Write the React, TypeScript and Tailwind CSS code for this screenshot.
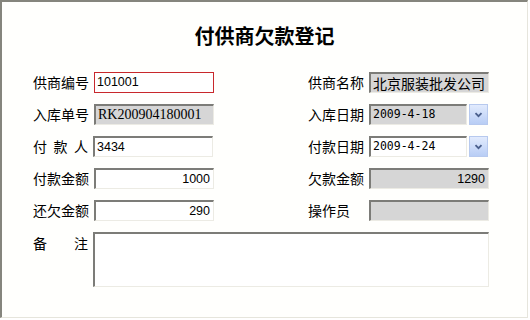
import React from 'react';

const cjk = "font-['Noto_Sans_CJK_SC','Noto_Sans',sans-serif]";
const mono = "font-['DejaVu_Sans_Mono','Liberation_Mono',monospace]";
const sans = "font-['Liberation_Sans',Arial,sans-serif]";

function Label({ text, spread }: { text: string; spread?: boolean }) {
  if (spread) {
    return (
      <div className={`w-[55px] flex justify-between text-[14px] leading-[21px] text-black ${cjk}`}>
        {text.split('').map((c, i) => (
          <span key={i}>{c}</span>
        ))}
      </div>
    );
  }
  return <div className={`w-[56px] whitespace-nowrap text-[14px] leading-[21px] text-black ${cjk}`}>{text}</div>;
}

function Field({
  value = '',
  width = 'w-[120px]',
  gray,
  right,
  focused,
  font = sans,
  size = 'text-[12.5px]',
}: {
  value?: string;
  width?: string;
  gray?: boolean;
  right?: boolean;
  focused?: boolean;
  font?: string;
  size?: string;
}) {
  const border = focused
    ? 'border border-[#c8282c]'
    : 'border-t-2 border-l-2 border-b border-r border-t-[#7c7c78] border-l-[#7c7c78] border-b-[#ecebe4] border-r-[#ecebe4]';
  return (
    <div
      className={`${width} h-[21px] flex items-center px-[2px] ${border} ${gray ? 'bg-[#d6d6d6]' : 'bg-white'} ${
        right ? 'justify-end pr-[3px]' : ''
      }`}
    >
      <span className={`${font} ${size} leading-none text-black whitespace-nowrap`}>{value}</span>
    </div>
  );
}

function DateField({ value, gray }: { value: string; gray?: boolean }) {
  return (
    <div className="flex items-center gap-[2px]">
      <Field value={value} width="w-[98px]" gray={gray} font={mono} size="text-[11.5px]" />
      <div className="w-[19px] h-[21px] flex items-center justify-center border border-[#b7c9ee] bg-gradient-to-b from-[#e2ebfd] to-[#b8cdf5]">
        <svg width="9" height="6" viewBox="0 0 9 6">
          <path d="M1.5 1.2 L4.5 4.2 L7.5 1.2" fill="none" stroke="#4a5f8c" strokeWidth="1.8" />
        </svg>
      </div>
    </div>
  );
}

export default function App() {
  return (
    <div className="w-[530px] h-[320px] bg-white">
      <div className="w-[528px] h-[318px] bg-[#fffffd] border-t-2 border-l-2 border-[#85857d] border-b border-r border-b-[#e6e5dc] border-r-[#e6e5dc] flex flex-col">
        <h1 className={`mt-[23px] text-center text-[20px] leading-[22px] font-bold text-black ${cjk}`}>付供商欠款登记</h1>

        <div className="mt-[25px] pl-[31px] flex flex-col gap-[11px]">
          <div className="flex items-center">
            <div className="flex items-center gap-[5px] w-[275px]">
              <Label text="供商编号" />
              <Field value="101001" focused />
            </div>
            <div className="flex items-center gap-[5px]">
              <Label text="供商名称" />
              <Field value="北京服装批发公司" gray font={cjk} size="text-[14px]" />
            </div>
          </div>

          <div className="flex items-center">
            <div className="flex items-center gap-[5px] w-[275px]">
              <Label text="入库单号" />
              <Field value="RK200904180001" gray font="font-['Liberation_Serif',serif]" size="text-[14px]" />
            </div>
            <div className="flex items-center gap-[5px]">
              <Label text="入库日期" />
              <DateField value="2009-4-18" gray />
            </div>
          </div>

          <div className="flex items-center">
            <div className="flex items-center gap-[5px] w-[275px]">
              <Label text="付款人" spread />
              <Field value="3434" />
            </div>
            <div className="flex items-center gap-[5px]">
              <Label text="付款日期" />
              <DateField value="2009-4-24" />
            </div>
          </div>

          <div className="flex items-center">
            <div className="flex items-center gap-[5px] w-[275px]">
              <Label text="付款金额" />
              <Field value="1000" right />
            </div>
            <div className="flex items-center gap-[5px]">
              <Label text="欠款金额" />
              <Field value="1290" right gray />
            </div>
          </div>

          <div className="flex items-center">
            <div className="flex items-center gap-[5px] w-[275px]">
              <Label text="还欠金额" />
              <Field value="290" right />
            </div>
            <div className="flex items-center gap-[5px]">
              <Label text="操作员" />
              <Field gray />
            </div>
          </div>

          <div className="flex items-start gap-[5px]">
            <div className="pt-[1px]">
              <Label text="备注" spread />
            </div>
            <div className="w-[396px] h-[55px] bg-white border-t-2 border-l-2 border-b border-r border-t-[#7c7c78] border-l-[#7c7c78] border-b-[#ecebe4] border-r-[#ecebe4]" />
          </div>
        </div>
      </div>
    </div>
  );
}
